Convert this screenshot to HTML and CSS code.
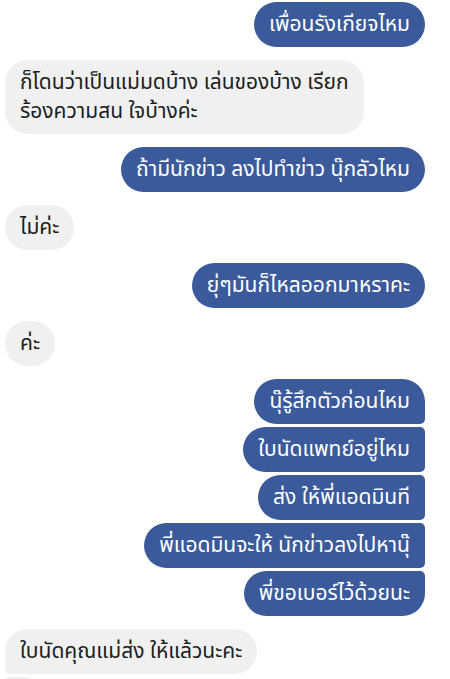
FILE: index.html
```html
<!DOCTYPE html>
<html lang="th">
<head>
    <meta charset="UTF-8">
    <meta name="viewport" content="width=device-width, initial-scale=1.0">
    <title>Chat</title>
    <link rel="stylesheet" href="styles.css">
</head>
<body>
    <div class="chat">
        <div class="row sent"><div class="bubble">เพื่อนรังเกียจไหม</div></div>
        <div class="row received"><div class="bubble">ก็โดนว่าเป็นแม่มดบ้าง เล่นของบ้าง เรียก<br>ร้องความสน ใจบ้างค่ะ</div></div>
        <div class="row sent"><div class="bubble">ถ้ามีนักข่าว ลงไปทำข่าว นุ๊กลัวไหม</div></div>
        <div class="row received"><div class="bubble">ไม่ค่ะ</div></div>
        <div class="row sent"><div class="bubble">ยุ่ๆมันก็ไหลออกมาหราคะ</div></div>
        <div class="row received"><div class="bubble">ค่ะ</div></div>

        <div class="group sent">
            <div class="bubble">นุ๊รู้สึกตัวก่อนไหม</div>
            <div class="bubble">ใบนัดแพทย์อยู่ไหม</div>
            <div class="bubble">ส่ง ให้พี่แอดมินที</div>
            <div class="bubble">พี่แอดมินจะให้ นักข่าวลงไปหานุ๊</div>
            <div class="bubble">พี่ขอเบอร์ไว้ด้วยนะ</div>
        </div>

        <div class="group received">
            <div class="bubble">ใบนัดคุณแม่ส่ง ให้แล้วนะคะ</div>
            <div class="bubble">&nbsp;</div>
        </div>
    </div>
</body>
</html>
```

FILE: styles.css
```css
body {
    margin: 0;
    padding: 0;
    background-color: #fff;
    font-family: "Noto Sans Thai", "Noto Sans", Tahoma, sans-serif;
    overflow: hidden;
}

.chat {
    display: flex;
    flex-direction: column;
    gap: 13px;
    padding: 2px 25px 0 5px;
}

.row, .group {
    display: flex;
    flex-direction: column;
}

.group {
    gap: 3px;
}

.sent {
    align-items: flex-end;
}

.received {
    align-items: flex-start;
}

.bubble {
    font-size: 21px;
    line-height: 29px;
    padding: 8px 15px;
    border-radius: 23px;
}

.sent .bubble {
    background-color: #3a5a9b;
    color: #fff;
}

.received .bubble {
    background-color: #f0f0f0;
    color: #1c1e21;
}

.group.sent .bubble {
    border-top-right-radius: 5px;
    border-bottom-right-radius: 5px;
}

.group.sent .bubble:first-child {
    border-top-right-radius: 23px;
}

.group.sent .bubble:last-child {
    border-bottom-right-radius: 23px;
}

.group.received .bubble {
    border-top-left-radius: 5px;
    border-bottom-left-radius: 5px;
}

.group.received .bubble:first-child {
    border-top-left-radius: 23px;
}

.group.received .bubble:last-child {
    border-bottom-left-radius: 23px;
}
```
